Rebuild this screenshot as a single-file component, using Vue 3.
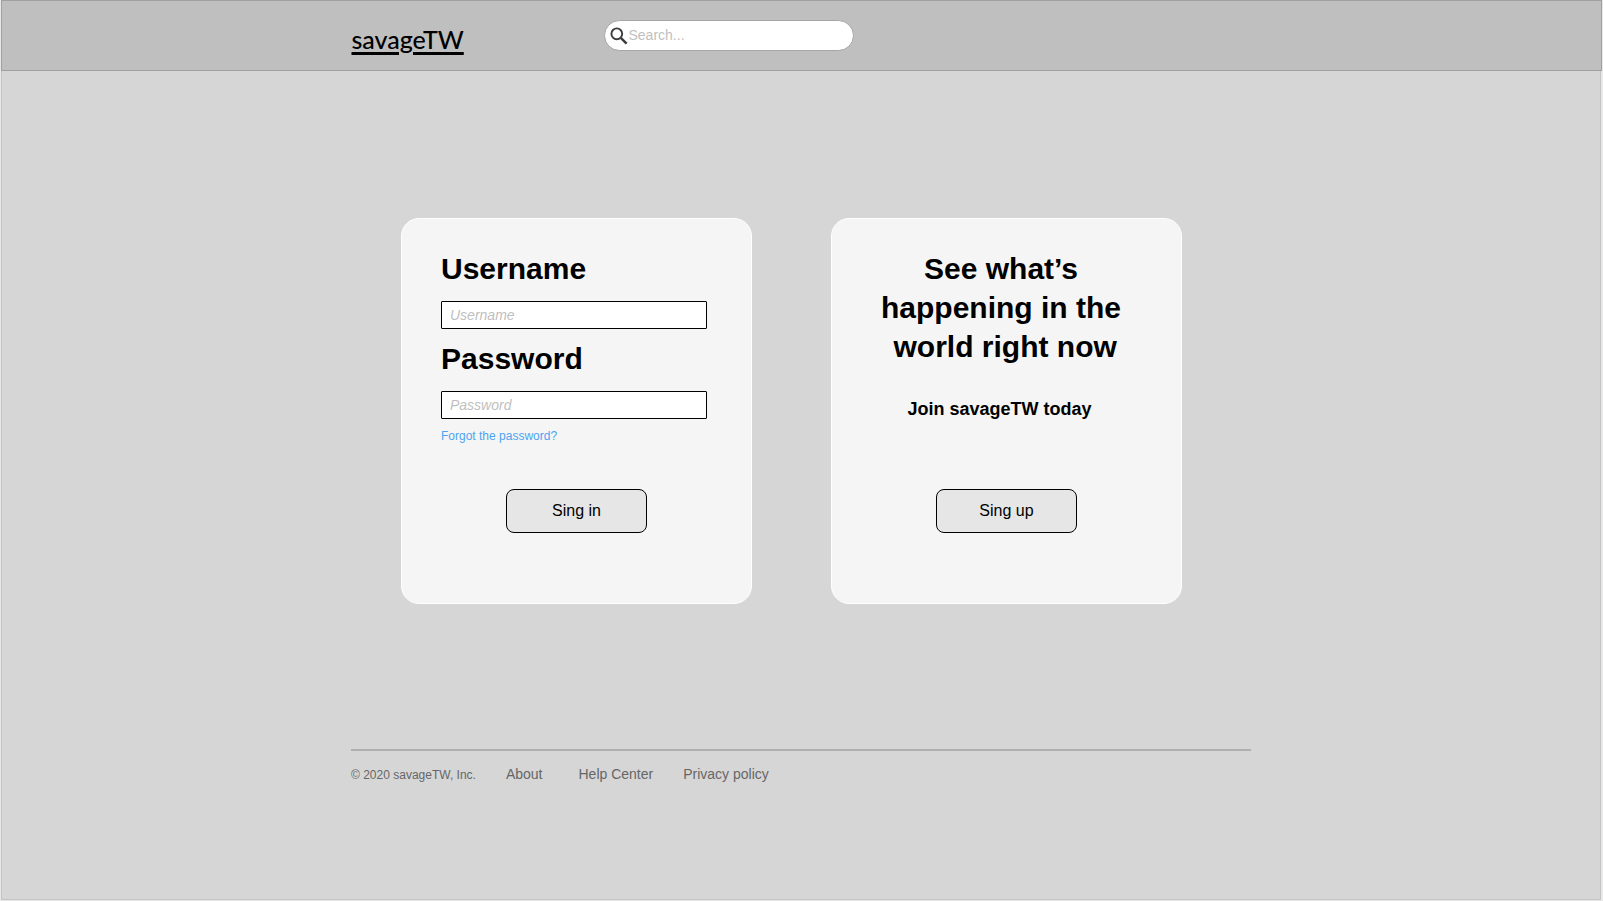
<script setup>
import { ref } from 'vue'

const search = ref('')
const username = ref('')
const password = ref('')
const links = ['About', 'Help Center', 'Privacy policy']
</script>

<template>
  <div class="page">
    <header class="topbar">
      <div class="container bar">
        <a class="logo" href="#">savageTW</a>
        <label class="search">
          <svg class="icon" viewBox="0 0 18 18" aria-hidden="true">
            <circle cx="6.8" cy="6.8" r="5.4" fill="none" stroke="#3c3c3c" stroke-width="1.9" />
            <path d="M10.8 10.8 L16.6 16.6" stroke="#3c3c3c" stroke-width="2.5" fill="none" />
          </svg>
          <input v-model="search" type="text" placeholder="Search..." aria-label="Search" />
        </label>
      </div>
    </header>

    <main class="container cards">
      <form class="card" @submit.prevent>
        <label class="title" for="username">Username</label>
        <input id="username" v-model="username" class="field" type="text" placeholder="Username" />
        <label class="title" for="password">Password</label>
        <input id="password" v-model="password" class="field" type="password" placeholder="Password" />
        <a class="forgot" href="#">Forgot the password?</a>
        <button class="action" type="submit">Sing in</button>
      </form>
      <section class="card">
        <h1 class="title headline">See what’s<br />happening in the<br />&nbsp;world right now</h1>
        <p class="join">Join savageTW today</p>
        <button class="action" type="button">Sing up</button>
      </section>
    </main>

    <footer class="container footer">
      <small class="copy">© 2020 savageTW, Inc.</small>
      <nav class="links">
        <a v-for="link in links" :key="link" href="#">{{ link }}</a>
      </nav>
    </footer>
  </div>
</template>

<style>
body {
  background: #e8e8e8;
}
</style>

<style scoped>
.page,
.page * {
  box-sizing: border-box;
}
.page {
  min-height: calc(100vh - 1px);
  margin: 0 2px 1px 1px;
  border: 1px solid #c4c4c4;
  border-top: 0;
  background: #d6d6d6;
  color: #000;
  font-family: "Liberation Sans", Arial, sans-serif;
}
.container {
  width: 100%;
  max-width: 900px;
  margin: 0 auto;
}
.topbar {
  margin: 0 -2px 0 -1px;
  border: 1px solid #a0a0a0;
  background: #bfbfbf;
}
.bar {
  display: grid;
  grid-template-columns: 252px 250px;
  height: 69px;
  padding-top: 19px;
}
.logo {
  justify-self: start;
  color: #000;
  font-family: Lato, sans-serif;
  font-size: 25px;
  font-weight: 500;
  line-height: 38px;
  text-decoration: underline;
  text-decoration-thickness: 3px;
  text-underline-offset: 3px;
}
.search {
  display: flex;
  align-items: center;
  gap: 1px;
  height: 31px;
  padding: 0 14px 0 5px;
  border: 1px solid #a6a6a6;
  border-radius: 16px;
  background: #fff;
}
.icon {
  flex: none;
  width: 18px;
  height: 18px;
}
.search input {
  flex: 1;
  min-width: 0;
  padding: 0 0 2px;
  border: 0;
  outline: 0;
  background: transparent;
  font: 14px "Liberation Sans", Arial, sans-serif;
}
input::placeholder {
  color: #bfbfbf;
  opacity: 1;
}
.cards {
  display: grid;
  grid-template-columns: 1fr 1fr;
  gap: 79px;
  padding: 147px 69px 0 50px;
}
.card {
  display: flex;
  flex-direction: column;
  height: 386px;
  padding: 30px 44px 70px 39px;
  border: 1px solid #fff;
  border-radius: 18px;
  background: #f5f5f5;
}
.title {
  margin: 0;
  font-size: 30px;
  font-weight: 700;
  line-height: 39px;
}
.field {
  width: 100%;
  height: 28px;
  margin: 13px 0 10px;
  padding: 0 8px;
  border: 1px solid #000;
  border-radius: 1px;
  outline: 0;
  background: #fff;
  font: 14px "Liberation Sans", Arial, sans-serif;
}
.field::placeholder {
  font-style: italic;
}
.forgot {
  align-self: flex-start;
  color: #4da3f2;
  font-size: 12px;
  line-height: 14px;
  text-decoration: none;
}
.headline {
  padding-right: 6px;
  text-align: center;
}
.join {
  margin: 32px 9px 0 0;
  font-size: 18px;
  font-weight: 700;
  line-height: 22px;
  text-align: center;
}
.action {
  width: 141px;
  height: 44px;
  margin: auto 0 0 65px;
  border: 1px solid #000;
  border-radius: 8px;
  background: #e6e6e6;
  color: #000;
  font: 16px "Liberation Sans", Arial, sans-serif;
}
.footer {
  display: flex;
  align-items: baseline;
  gap: 30px;
  margin-top: 145px;
  padding-top: 15px;
  border-top: 2px solid #b0b0b0;
  color: #666;
}
.copy {
  font-size: 12px;
}
.links {
  display: flex;
  gap: 36px;
  font-size: 14px;
}
.links a:last-child {
  margin-left: -6px;
}
.links a {
  color: inherit;
  text-decoration: none;
}
</style>
